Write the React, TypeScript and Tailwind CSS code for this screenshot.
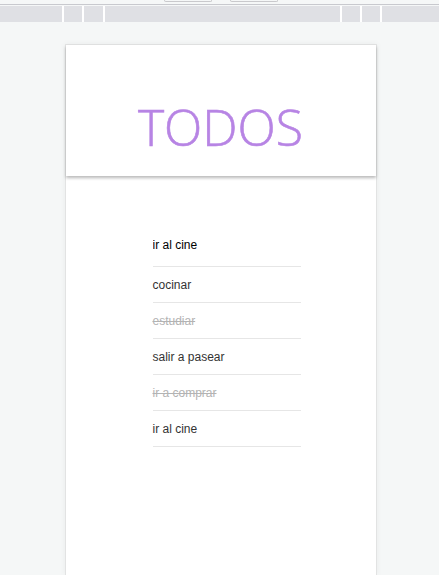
import React from 'react';

interface Todo {
  id: number;
  text: string;
  done: boolean;
}

const todos: Todo[] = [
  { id: 1, text: 'cocinar', done: false },
  { id: 2, text: 'estudiar', done: true },
  { id: 3, text: 'salir a pasear', done: false },
  { id: 4, text: 'ir a comprar', done: true },
  { id: 5, text: 'ir al cine', done: false },
];

const TopBar: React.FC = () => {
  return (
    <div className="w-full">
      <div className="relative h-1 bg-[#f5f7f7]">
        <div className="absolute left-[164px] top-0 h-[2px] w-[48px] rounded-b-sm border border-t-0 border-[#c9c9cc]" />
        <div className="absolute left-[230px] top-0 h-[2px] w-[48px] rounded-b-sm border border-t-0 border-[#c9c9cc]" />
      </div>
      <div className="h-px bg-[#c8c9ce]" />
      <div className="h-px bg-[#f5f7f7]" />
      <div className="flex h-4 bg-[#dfe0e4]">
        <div className="w-[62px]" />
        <div className="w-[2px] bg-white" />
        <div className="w-[18px]" />
        <div className="w-[2px] bg-white" />
        <div className="w-[19px]" />
        <div className="w-[2px] bg-white" />
        <div className="flex-1" />
        <div className="w-[2px] bg-white" />
        <div className="w-[18px]" />
        <div className="w-[2px] bg-white" />
        <div className="w-[18px]" />
        <div className="w-[2px] bg-white" />
        <div className="w-[57px]" />
      </div>
    </div>
  );
};

export default function App() {
  return (
    <div className="flex h-[575px] flex-col overflow-hidden bg-[#f5f7f7] font-['Liberation_Sans',Arial,sans-serif]">
      <TopBar />
      <div className="flex flex-1 justify-center pt-[22px]">
        <div className="ml-[2px] flex w-[312px] flex-col border border-b-0 border-[#e2e3e3] bg-white shadow-[0_0_6px_rgba(0,0,0,0.05)]">
          <header className="relative z-10 flex h-[131px] items-end justify-center pb-[24px] shadow-[0_2px_3px_rgba(0,0,0,0.28)]">
            <h1 className="font-['Open_Sans',sans-serif] text-[50px] font-light leading-none text-[#b784e4] [-webkit-text-stroke:0.6px_#b784e4]">
              TODOS
            </h1>
          </header>
          <main className="flex justify-center pt-[50px] pl-[12px]">
            <ul className="w-[148px]">
              <li className="border-b border-[#e6e6e6] pb-[10px] pt-[6px]">
                <input
                  className="h-[14px] w-full bg-transparent text-[12px] text-black outline-none"
                  defaultValue="ir al cine"
                />
              </li>
              {todos.map((t) => (
                <li
                  key={t.id}
                  className={
                    t.done
                      ? 'flex h-9 items-center border-b border-[#e6e6e6] text-[12px] text-[#b3b3b3] line-through'
                      : 'flex h-9 items-center border-b border-[#e6e6e6] text-[12px] text-[#333]'
                  }
                >
                  {t.text}
                </li>
              ))}
            </ul>
          </main>
        </div>
      </div>
    </div>
  );
}
